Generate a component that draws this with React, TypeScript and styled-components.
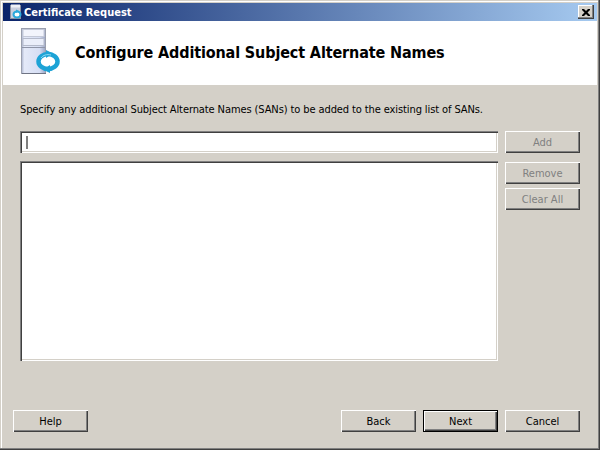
import React from 'react'
import styled, { createGlobalStyle } from 'styled-components'

const GlobalStyle = createGlobalStyle`
  html, body {
    margin: 0;
    padding: 0;
    background: #d4d0c8;
  }
`

const Window = styled.div`
  box-sizing: border-box;
  width: 600px;
  height: 450px;
  display: flex;
  flex-direction: column;
  padding: 3px 3px 2px 3px;
  background: #d4d0c8;
  box-shadow: inset -1px -1px 0 #404040, inset -2px -2px 0 #808080, inset 1px 1px 0 #d4d0c8, inset 2px 2px 0 #ffffff;
  font-family: 'DejaVu Sans Condensed', 'DejaVu Sans', sans-serif;
  font-stretch: condensed;
  font-size: 11px;
  color: #000;
`

const TitleBar = styled.div`
  height: 18px;
  flex: none;
  display: flex;
  align-items: center;
  justify-content: space-between;
  padding: 0 3px 0 3px;
  background: linear-gradient(to right, #0a246a, #a6caf0);
`

const TitleLeft = styled.div`
  display: flex;
  align-items: center;
  gap: 0;
`

const TitleText = styled.span`
  color: #fff;
  font-weight: bold;
  font-size: 11px;
`

const CloseButton = styled.div`
  width: 16px;
  height: 14px;
  display: flex;
  align-items: center;
  justify-content: center;
  background: #d4d0c8;
  box-shadow: inset -1px -1px 0 #404040, inset -2px -2px 0 #808080, inset 1px 1px 0 #fff;
`

const Header = styled.div`
  height: 64px;
  flex: none;
  display: flex;
  align-items: flex-start;
  gap: 12px;
  padding: 7px 0 0 18px;
  background: #fff;
  box-sizing: border-box;
`

const Heading = styled.h1`
  margin: 15px 0 0 0;
  font-size: 16px;
  line-height: 20px;
  font-weight: bold;
  letter-spacing: -0.13px;
`

const Body = styled.div`
  flex: 1;
  display: flex;
  flex-direction: column;
  padding: 0 17px 16px 10px;
`

const Description = styled.div`
  margin: 18px 0 0 7px;
  height: 13px;
  line-height: 13px;
  letter-spacing: -0.1px;
  white-space: nowrap;
`

const Editor = styled.div`
  flex: 1;
  display: grid;
  grid-template-columns: 478px 75px;
  grid-template-rows: 22px 200px;
  column-gap: 7px;
  row-gap: 8px;
  margin: 15px 0 0 7px;
  align-content: start;
`

const sunken = `
  box-sizing: border-box;
  background: #fff;
  box-shadow: inset 1px 1px 0 #808080, inset 2px 2px 0 #404040, inset -1px -1px 0 #fff, inset -2px -2px 0 #d4d0c8;
`

const TextInput = styled.div`
  ${sunken}
  display: flex;
  align-items: center;
  padding-left: 6px;
`

const Caret = styled.div`
  width: 2px;
  height: 13px;
  background: #808080;
`

const ListBox = styled.div`
  ${sunken}
`

const Side = styled.div`
  display: flex;
  flex-direction: column;
  gap: 4px;
  padding-top: 1px;
`

const Button = styled.div<{ $disabled?: boolean; $default?: boolean }>`
  box-sizing: border-box;
  width: 75px;
  height: 22px;
  flex: none;
  display: flex;
  align-items: center;
  justify-content: center;
  background: #d4d0c8;
  color: ${({ $disabled }) => ($disabled ? '#808080' : '#000')};
  border: ${({ $default }) => ($default ? '1px solid #000' : 'none')};
  box-shadow: inset 1px 1px 0 #fff, inset -1px -1px 0 #404040, inset -2px -2px 0 #808080;
`

const Footer = styled.div`
  display: flex;
`

const FooterRight = styled.div`
  margin-left: auto;
  display: flex;
  gap: 7px;
`

// server tower with the blue circular arrows over its lower right corner
const ServerIcon = () => (
  <svg width="42" height="48" viewBox="0 0 42 48">
    <defs>
      <linearGradient id="srv" x1="0" y1="0" x2="1" y2="0">
        <stop offset="0" stopColor="#a9b2cc" />
        <stop offset="0.12" stopColor="#e4e9f8" />
        <stop offset="0.75" stopColor="#d6def4" />
        <stop offset="1" stopColor="#9aa4c4" />
      </linearGradient>
    </defs>
    <rect x="0.5" y="0.5" width="24" height="45" fill="url(#srv)" stroke="#9a9fae" />
    <rect x="2" y="1.500" width="21" height="7" fill="#f2f4fc" stroke="#c4c9d8" />
    <rect x="2" y="10.500" width="21" height="7" fill="#eaeefa" stroke="#b4bacb" />
    <line x1="1" y1="19.500" x2="24" y2="19.500" stroke="#8f95a8" />
    <line x1="1" y1="45.500" x2="25" y2="45.500" stroke="#6f7484" />
    <ellipse cx="27" cy="33.500" rx="9.500" ry="7.500" fill="#fff" stroke="#1da3d6" strokeWidth="4.500" />
    <path d="M25 22l7 3.500-7 4.500z" fill="#1da3d6" />
    <path d="M29 45l-7-3.500 7-4.500z" fill="#1da3d6" />
    <path d="M20 30c2-3 6-4 10-3" fill="none" stroke="#8fdcf5" strokeWidth="1" />
  </svg>
)

const SmallIcon = () => (
  <svg width="18" height="16" viewBox="0 0 18 16">
    <rect x="4.500" y="1.500" width="10" height="13" fill="#c9cede" stroke="#8b90a0" />
    <rect x="5" y="0.500" width="9" height="3" fill="#eef0f6" />
    <ellipse cx="11" cy="10.500" rx="3.500" ry="3" fill="#fff" stroke="#2aa8dc" strokeWidth="2" />
    <path d="M10 5.500l3 1.500-3 2z" fill="#2aa8dc" />
  </svg>
)

export default function App() {
  return (
    <>
      <GlobalStyle />
      <Window>
        <TitleBar>
          <TitleLeft>
            <SmallIcon />
            <TitleText>Certificate Request</TitleText>
          </TitleLeft>
          <CloseButton>
            <svg width="8" height="7" viewBox="0 0 8 7">
              <path d="M0 0h2l2 2 2-2h2v1L5.500 3.500 8 6v1H6L4 5 2 7H0V6l2.500-2.500L0 1z" fill="#000" />
            </svg>
          </CloseButton>
        </TitleBar>
        <Header>
          <ServerIcon />
          <Heading>Configure Additional Subject Alternate Names</Heading>
        </Header>
        <Body>
          <Description>
            Specify any additional Subject Alternate Names (SANs) to be added to the existing list of SANs.
          </Description>
          <Editor>
            <TextInput>
              <Caret />
            </TextInput>
            <Button $disabled>Add</Button>
            <ListBox />
            <Side>
              <Button $disabled>Remove</Button>
              <Button $disabled>Clear All</Button>
            </Side>
          </Editor>
          <Footer>
            <Button>Help</Button>
            <FooterRight>
              <Button>Back</Button>
              <Button $default>Next</Button>
              <Button>Cancel</Button>
            </FooterRight>
          </Footer>
        </Body>
      </Window>
    </>
  )
}
